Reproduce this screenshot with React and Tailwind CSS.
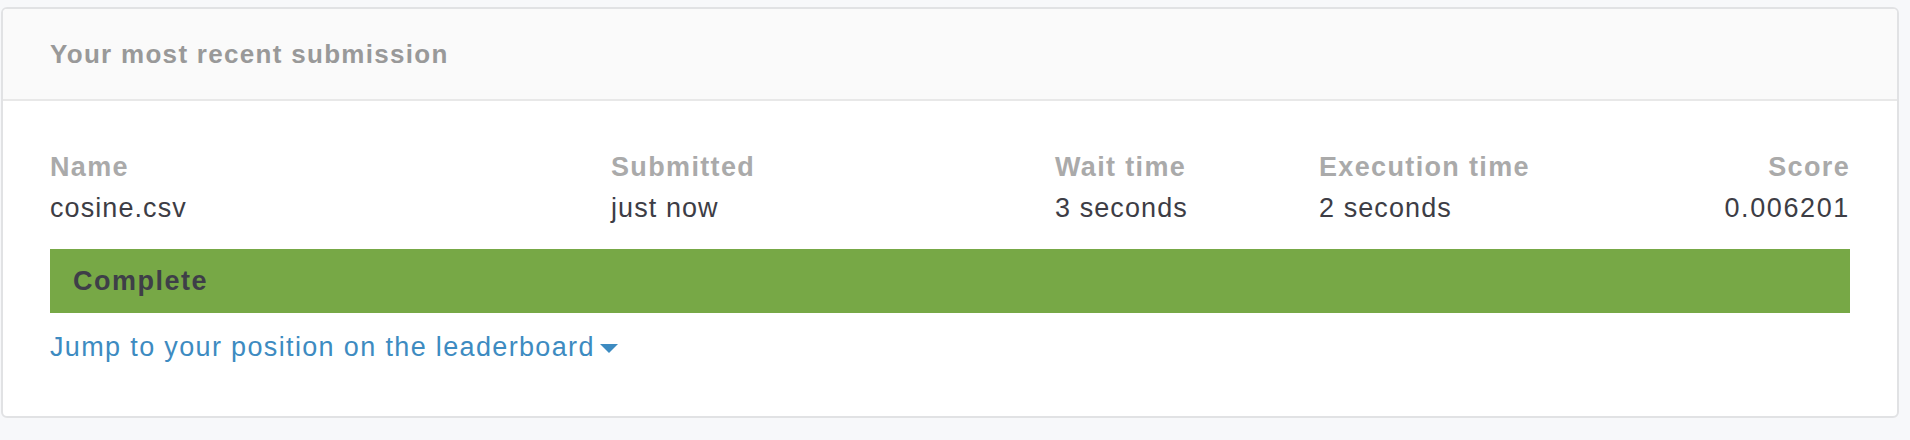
import React from "react";

const columns = [
  { label: "Name", value: "cosine.csv" },
  { label: "Submitted", value: "just now" },
  { label: "Wait time", value: "3 seconds" },
  { label: "Execution time", value: "2 seconds" },
  { label: "Score", value: "0.006201", right: true },
];

const App = () => {
  return (
    <div
      className="min-h-[440px] bg-[#f7f8fa] pt-[7px] pl-px pr-[11px]"
      style={{ fontFamily: '"Liberation Sans", Arial, sans-serif' }}
    >
      <div className="rounded-[6px] border-2 border-[#e1e2e4] bg-white overflow-hidden">
        <div className="h-[92px] flex items-center px-[47px] bg-[#fafafa] border-b-2 border-[#e8e8e8]">
          <h2 className="text-[26px] font-bold tracking-[0.05em] text-[#999999]">
            Your most recent submission
          </h2>
        </div>

        <div className="px-[47px] pt-[46px] pb-[48px]">
          <div className="grid grid-cols-[561px_444px_264px_1fr_auto] text-[27px] leading-[41px] tracking-[0.04em]">
            {columns.map((col) => (
              <div key={col.label} className={col.right ? "text-right" : ""}>
                <div className="font-bold tracking-[0.05em] text-[#aaaaaa]">{col.label}</div>
                <div className={`text-[#3d3d45] ${col.right ? "tracking-[0.06em]" : ""}`}>
                  {col.value}
                </div>
              </div>
            ))}
          </div>

          <div className="mt-[20px] h-[64px] bg-[#77a846] flex items-center pl-[23px]">
            <span className="text-[27px] font-bold tracking-[0.055em] text-[#3e3e48]">
              Complete
            </span>
          </div>

          <div className="mt-[14px] flex items-center">
            <a
              href="#"
              className="flex items-center text-[27px] leading-[41px] tracking-[0.05em] text-[#3d8bc1]"
            >
              Jump to your position on the leaderboard
              <svg
                className="ml-[5px] mt-[1px]"
                width="18"
                height="9"
                viewBox="0 0 18 9"
              >
                <path d="M0 0 L18 0 L9 9 Z" fill="#3d8bc1" />
              </svg>
            </a>
          </div>
        </div>
      </div>
    </div>
  );
};

export default App;
